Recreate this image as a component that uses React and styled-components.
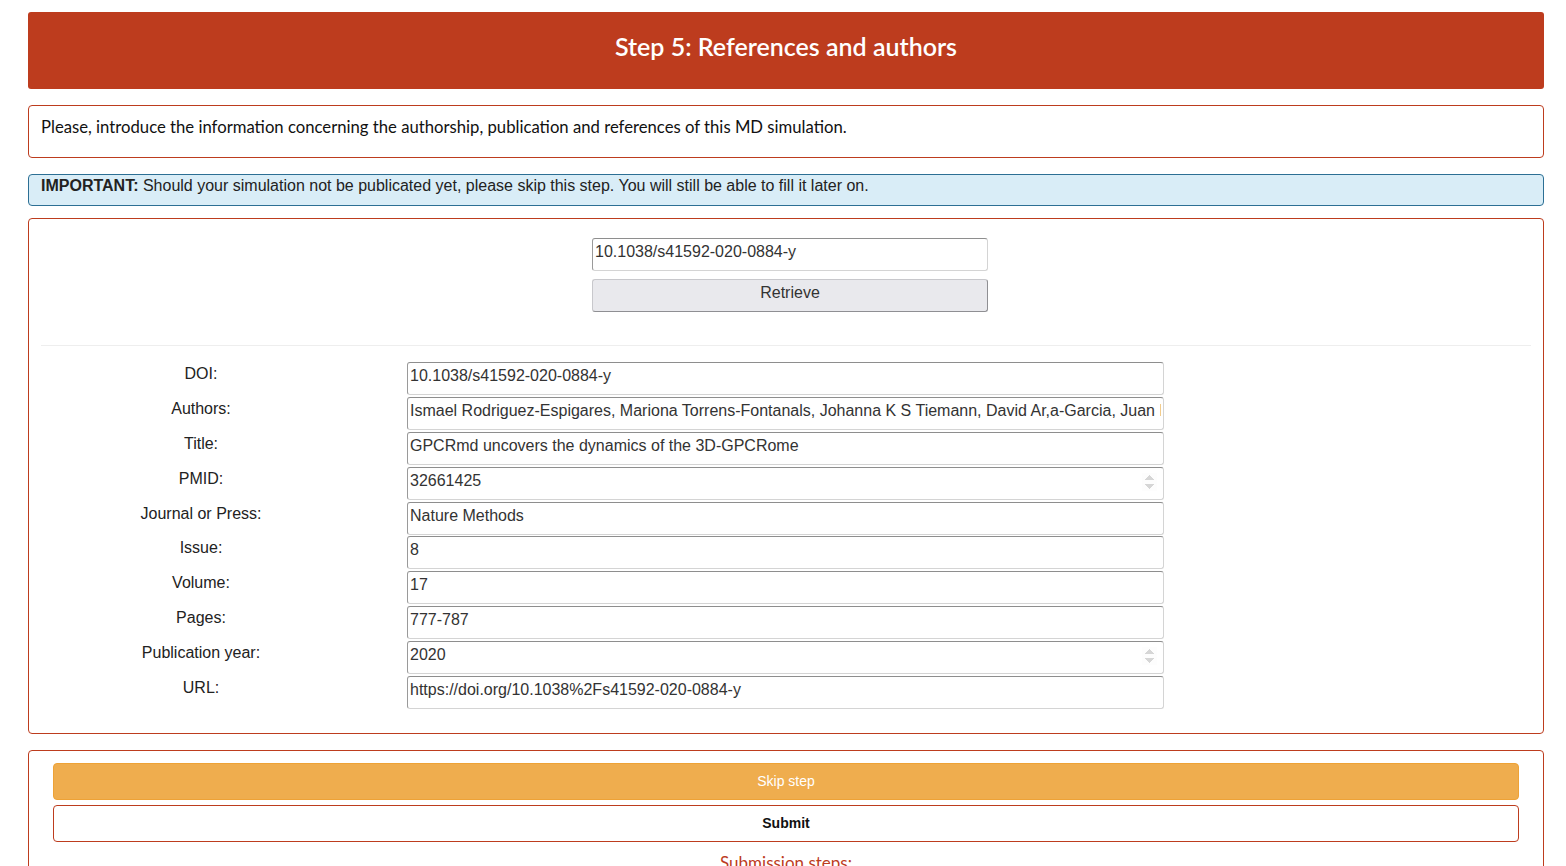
import styled, { createGlobalStyle } from "styled-components";

const GlobalStyle = createGlobalStyle`
  body {
    margin: 0;
    background: #fff;
    font-family: "Liberation Sans", Arial, sans-serif;
    color: #222;
  }
`;

const Page = styled.div`
  padding: 12px 22px 0 28px;
  height: 866px;
  overflow: hidden;
  box-sizing: border-box;
`;

const Header = styled.div`
  background: #bd3c1e;
  border-radius: 3px;
  height: 77px;
  display: flex;
  align-items: center;
  justify-content: center;
  color: #fff;
  font-family: Lato, "Liberation Sans", sans-serif;
  font-size: 25px;
  font-weight: 600;
  padding-bottom: 10px;
  box-sizing: border-box;
`;

const Box = styled.div`
  border: 1px solid #bd3c1e;
  border-radius: 4px;
  margin-top: 16px;
  background: #fff;
`;

const Intro = styled(Box)`
  height: 53px;
  box-sizing: border-box;
  padding: 11px 12px 0;
  font-family: Lato, "Liberation Sans", sans-serif;
  font-size: 16.7px;
  color: #111;
`;

const Alert = styled.div`
  margin-top: 16px;
  background: #d9edf7;
  border: 1px solid #2c6f94;
  border-radius: 4px;
  height: 32px;
  box-sizing: border-box;
  padding: 2px 12px 0;
  font-size: 16px;
  color: #222;
  b {
    font-weight: 700;
  }
`;

const FormBox = styled(Box)`
  margin-top: 12px;
  padding: 19px 12px 24px;
`;

const Retrieve = styled.div`
  display: flex;
  flex-direction: column;
  align-items: center;
  gap: 8px;
  padding: 0 0 33px 8px;
  border-bottom: 1px solid #eee;
  margin-bottom: 16px;
`;

const Input = styled.input`
  box-sizing: border-box;
  width: ${(p) => p.$w || 757}px;
  height: 33px;
  font-family: "Liberation Sans", Arial, sans-serif;
  font-size: 16px;
  color: #333;
  padding: 0 2px 5px 2px;
  border: 1px solid #d4d4d4;
  border-top-color: #8e8e8e;
  border-left-color: #9a9a9a;
  border-radius: 3px;
  background: #fff;
  outline: none;
  &::-webkit-inner-spin-button {
    opacity: 0.35;
    height: 18px;
    margin: 2px 4px 0 0;
  }
`;

const GrayButton = styled.button`
  box-sizing: border-box;
  width: 396px;
  height: 33px;
  background: #e9e9ed;
  border: 1px solid #c8c8cc;
  border-bottom-color: #8f8f93;
  border-right-color: #8f8f93;
  border-radius: 3px;
  font-family: "Liberation Sans", Arial, sans-serif;
  font-size: 16px;
  color: #333;
  padding-bottom: 6px;
`;

const Fields = styled.div`
  display: grid;
  grid-template-columns: 320px 757px;
  grid-auto-rows: 33px;
  column-gap: 46px;
  row-gap: 1.9px;
`;

const Label = styled.div`
  text-align: center;
  font-size: 16px;
  color: #222;
  padding-top: 3px;
`;

const Actions = styled(Box)`
  padding: 12px 24px 20px;
  display: flex;
  flex-direction: column;
  gap: 5px;
`;

const ActionButton = styled.button`
  height: 37px;
  border-radius: 4px;
  font-family: "Liberation Sans", Arial, sans-serif;
  font-size: 14px;
  border: 1px solid ${(p) => (p.$primary ? "#eea236" : "#bd3c1e")};
  background: ${(p) => (p.$primary ? "#efad4e" : "#fff")};
  color: ${(p) => (p.$primary ? "#fff" : "#111")};
  font-weight: ${(p) => (p.$primary ? 400 : 700)};
  padding-bottom: 3px;
`;

const StepsTitle = styled.div`
  text-align: center;
  font-family: Lato, "Liberation Sans", sans-serif;
  font-size: 17px;
  color: #bd3c1e;
  margin-top: 5px;
`;

const fields = [
  ["DOI:", "10.1038/s41592-020-0884-y"],
  [
    "Authors:",
    "Ismael Rodriguez-Espigares, Mariona Torrens-Fontanals, Johanna K S Tiemann, David Ar,a-Garcia, Juan Manuel Ramirez-Anguita",
  ],
  ["Title:", "GPCRmd uncovers the dynamics of the 3D-GPCRome"],
  ["PMID:", "32661425", "number"],
  ["Journal or Press:", "Nature Methods"],
  ["Issue:", "8"],
  ["Volume:", "17"],
  ["Pages:", "777-787"],
  ["Publication year:", "2020", "number"],
  ["URL:", "https://doi.org/10.1038%2Fs41592-020-0884-y"],
];

const App = () => {
  return (
    <Page>
      <GlobalStyle />
      <Header>Step 5: References and authors</Header>
      <Intro>
        Please, introduce the information concerning the authorship, publication and
        references of this MD simulation.
      </Intro>
      <Alert>
        <b>IMPORTANT:</b> Should your simulation not be publicated yet, please skip this
        step. You will still be able to fill it later on.
      </Alert>
      <FormBox>
        <Retrieve>
          <Input $w={396} defaultValue="10.1038/s41592-020-0884-y" />
          <GrayButton>Retrieve</GrayButton>
        </Retrieve>
        <Fields>
          {fields.map(([label, value, type]) => [
            <Label key={label + "-l"}>{label}</Label>,
            <Input key={label} type={type || "text"} defaultValue={value} />,
          ])}
        </Fields>
      </FormBox>
      <Actions>
        <ActionButton $primary>Skip step</ActionButton>
        <ActionButton>Submit</ActionButton>
        <StepsTitle>Submission steps:</StepsTitle>
      </Actions>
    </Page>
  );
};

export default App;
